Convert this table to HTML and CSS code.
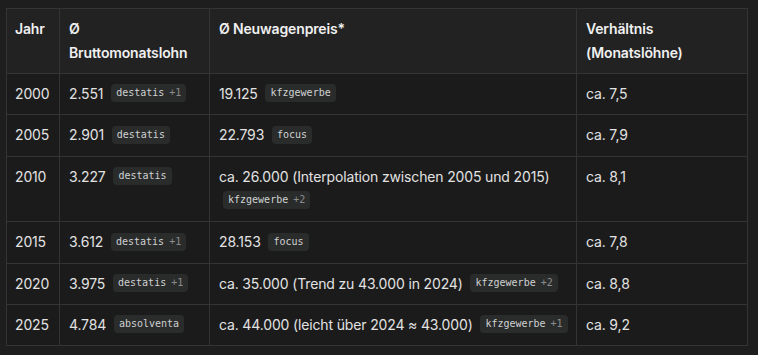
FILE: index.html
```html
<!DOCTYPE html>
<html lang="de">
<head>
<meta charset="utf-8">
<link rel="stylesheet" href="styles.css">
</head>
<body>
<div class="wrap">
<table class="data">
<colgroup><col class="c1"><col class="c2"><col class="c3"><col class="c4"></colgroup>
<thead>
<tr><th>Jahr</th><th>Ø Bruttomonatslohn</th><th>Ø Neuwagenpreis*</th><th>Verhältnis (Monatslöhne)</th></tr>
</thead>
<tbody>
<tr><td>2000</td><td>2.551 <span class="src">destatis<span class="more">+1</span></span></td><td>19.125 <span class="src">kfzgewerbe</span></td><td>ca. 7,5</td></tr>
<tr><td>2005</td><td>2.901 <span class="src">destatis</span></td><td>22.793 <span class="src">focus</span></td><td>ca. 7,9</td></tr>
<tr><td>2010</td><td>3.227 <span class="src">destatis</span></td><td>ca. 26.000 (Interpolation zwischen 2005 und 2015) <span class="src">kfzgewerbe<span class="more">+2</span></span></td><td>ca. 8,1</td></tr>
<tr><td>2015</td><td>3.612 <span class="src">destatis<span class="more">+1</span></span></td><td>28.153 <span class="src">focus</span></td><td>ca. 7,8</td></tr>
<tr><td>2020</td><td>3.975 <span class="src">destatis<span class="more">+1</span></span></td><td>ca. 35.000 (Trend zu 43.000 in 2024) <span class="src">kfzgewerbe<span class="more">+2</span></span></td><td>ca. 8,8</td></tr>
<tr><td>2025</td><td>4.784 <span class="src">absolventa</span></td><td>ca. 44.000 (leicht über 2024 ≈ 43.000) <span class="src">kfzgewerbe<span class="more">+1</span></span></td><td>ca. 9,2</td></tr>
</tbody>
</table>
</div>
</body>
</html>
```

FILE: styles.css
```css
html, body {
  margin: 0;
  padding: 0;
  background: #1e1e1e;
}
.wrap {
  padding: 8px 0 0 6px;
}
.data {
  border-collapse: collapse;
  table-layout: fixed;
  width: 741px;
  background: #1b1b1b;
  font-family: Inter, "Noto Sans", sans-serif;
  font-size: 14px;
  line-height: 24px;
  color: #e2e2e2;
  letter-spacing: -0.15px;
}
.c1 { width: 53px; }
.c2 { width: 150px; }
.c3 { width: 367px; }
.c4 { width: 171px; }
.data th, .data td {
  border: 1px solid #333434;
  padding: 8px 4px 8px 9px;
  text-align: left;
  vertical-align: top;
}
.data th {
  padding-right: 10px;
  font-weight: 600;
  color: #f0f0f0;
}
.data th:first-child, .data td:first-child {
  padding-left: 8px;
}
.data thead tr {
  background: #222222;
}
.src {
  display: inline-block;
  margin: 0 0 4px 4px;
  padding: 0 5px;
  height: 18px;
  line-height: 18px;
  vertical-align: 2.6px;
  border-radius: 4px;
  background: #2a2b2b;
  color: #cfd2d2;
  font-family: "DejaVu Sans Mono", monospace;
  font-size: 10px;
  letter-spacing: 0;
}
.more {
  margin-left: 5px;
  color: #8a8c8c;
}
```
